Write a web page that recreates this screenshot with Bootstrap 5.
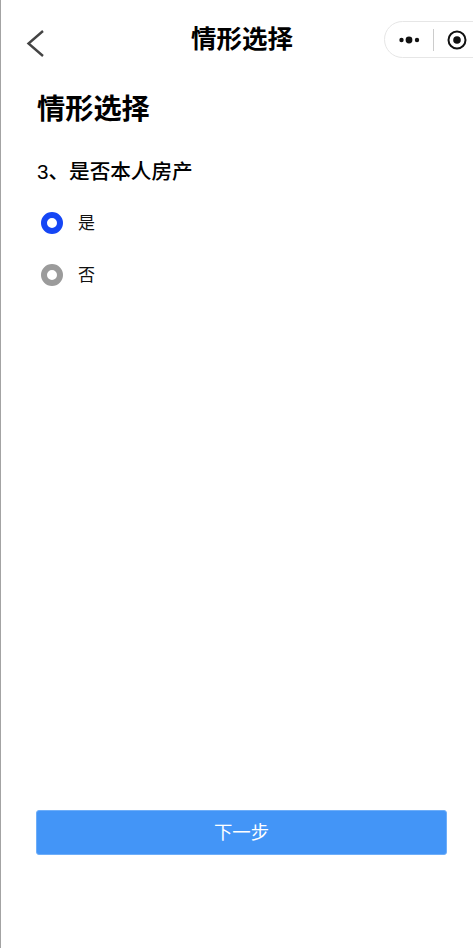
<!DOCTYPE html>
<html lang="zh-CN">
<head>
    <meta charset="UTF-8">
    <title>情形选择</title>
    <link href="https://cdn.jsdelivr.net/npm/bootstrap@5.3.2/dist/css/bootstrap.min.css" rel="stylesheet">
    <style>
        html, body { height: 100%; overflow: hidden; }
        body { font-family: "Liberation Sans", "Noto Sans CJK SC", sans-serif; color: #111; background: #fff; }
        .page-wrap { height: 948px; border-left: 1px solid #a3a3a3; }
        .top-bar { height: 78px; padding-top: 2px; }
        .back-btn { left: 23px; top: 27px; width: 24px; height: 32px; }
        .top-title { font-size: 25.5px; font-weight: 700; color: #000; margin-left: 10px; line-height: 1; }
        .capsule { left: 383px; top: 21px; width: 110px; height: 37px; border: 1px solid #e6e6e6; border-radius: 19px; padding-left: 14px; background: #fff; }
        .capsule-line { width: 1px; height: 22px; background: #ccc; margin: 0 13px 0 13px; }
        .main-area { padding: 0 26px 93px 35px; }
        .page-head { font-size: 28.2px; font-weight: 700; margin: 15px 0 0 1px; line-height: 32px; color: #000; }
        .question { font-size: 20.6px; font-weight: 500; margin: 33px 0 0 1px; line-height: 28px; color: #000; }
        .choice { height: 52px; padding-left: 5px; font-size: 17px; }
        .choice-list { margin-top: 12px; }
        .dot { width: 22px; height: 22px; border-radius: 50%; border: 6.5px solid #1546f5; margin: 0 15px 2px 0; }
        .dot.off { border-color: #9b9b9b; }
        .next-btn { height: 45px; background: #4395f7; border: 1px solid #6eaef9; border-radius: 3px; color: #fff; font-size: 18.4px; font-family: "Liberation Serif", "Noto Sans CJK SC", serif; padding: 3px 0 0; }
        .next-btn:hover { background: #4395f7; color: #fff; }
    </style>
</head>
<body>

<div class="page-wrap d-flex flex-column position-relative overflow-hidden">
    <div class="top-bar d-flex align-items-center justify-content-center flex-shrink-0">
        <span class="top-title">情形选择</span>
    </div>
    <svg class="back-btn position-absolute" viewBox="0 0 24 32" fill="none" stroke="#444" stroke-width="2.4">
        <path d="M19 4 L4.5 16.5 L19 29"/>
    </svg>
    <div class="capsule position-absolute d-flex align-items-center">
        <svg width="21" height="8" viewBox="0 0 21 8" fill="#111">
            <circle cx="2.5" cy="4" r="2.2"/><circle cx="10" cy="4" r="3.4"/><circle cx="18" cy="4" r="2.2"/>
        </svg>
        <span class="capsule-line"></span>
        <svg width="20" height="20" viewBox="0 0 20 20">
            <circle cx="10" cy="10" r="8.5" fill="none" stroke="#111" stroke-width="2"/>
            <circle cx="10" cy="10" r="3.8" fill="#111"/>
        </svg>
    </div>

    <div class="main-area d-flex flex-column flex-grow-1">
        <h1 class="page-head">情形选择</h1>
        <div class="question">3、是否本人房产</div>
        <div class="choice-list">
            <div class="choice d-flex align-items-center"><span class="dot"></span>是</div>
            <div class="choice d-flex align-items-center"><span class="dot off"></span>否</div>
        </div>
        <button type="button" class="btn next-btn w-100 mt-auto">下一步</button>
    </div>
</div>

<script src="https://cdn.jsdelivr.net/npm/bootstrap@5.3.2/dist/js/bootstrap.bundle.min.js"></script>
</body>
</html>
